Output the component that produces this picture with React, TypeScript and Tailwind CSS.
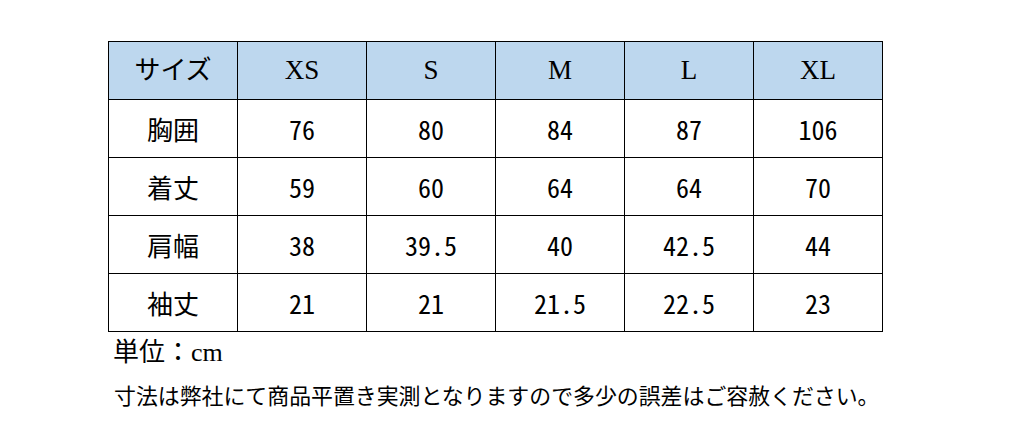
const sizes = ["XS", "S", "M", "L", "XL"];

const rows: [string, string[]][] = [
  ["胸囲", ["76", "80", "84", "87", "106"]],
  ["着丈", ["59", "60", "64", "64", "70"]],
  ["肩幅", ["38", "39.5", "40", "42.5", "44"]],
  ["袖丈", ["21", "21", "21.5", "22.5", "23"]],
];

const serif = "font-['Liberation_Serif','Noto_Sans_CJK_JP',serif]";
const jp = "font-['Noto_Sans_CJK_JP',sans-serif]";
const num = "font-['Noto_Sans_CJK_JP',sans-serif] [font-feature-settings:'hwid'] text-[26px]";

export default function App() {
  return (
    <div className="h-[447px] w-[1036px] bg-white pl-[108px] pt-[41px] text-black">
      <table className="w-[775px] table-fixed border-collapse">
        <thead>
          <tr className="h-[58px] bg-[#bdd7ee]">
            <th className={`border border-black text-[26px] font-normal ${serif}`}>サイズ</th>
            {sizes.map((s) => (
              <th key={s} className={`border border-black text-[27px] font-normal ${serif}`}>
                {s}
              </th>
            ))}
          </tr>
        </thead>
        <tbody>
          {rows.map(([label, vals]) => (
            <tr key={label} className="h-[58px]">
              <td className={`border border-black text-center text-[26px] ${jp}`}>{label}</td>
              {vals.map((v, i) => (
                <td key={i} className={`border border-black text-center ${num}`}>
                  {v}
                </td>
              ))}
            </tr>
          ))}
        </tbody>
      </table>
      <p className={`mt-[6px] pl-[5px] text-[26px] leading-[30px] ${serif}`}>単位：cm</p>
      <p className={`mt-[14px] pl-[6px] text-[21.9px] leading-[26px] ${jp}`}>
        寸法は弊社にて商品平置き実測となりますので多少の誤差はご容赦ください。
      </p>
    </div>
  );
}
